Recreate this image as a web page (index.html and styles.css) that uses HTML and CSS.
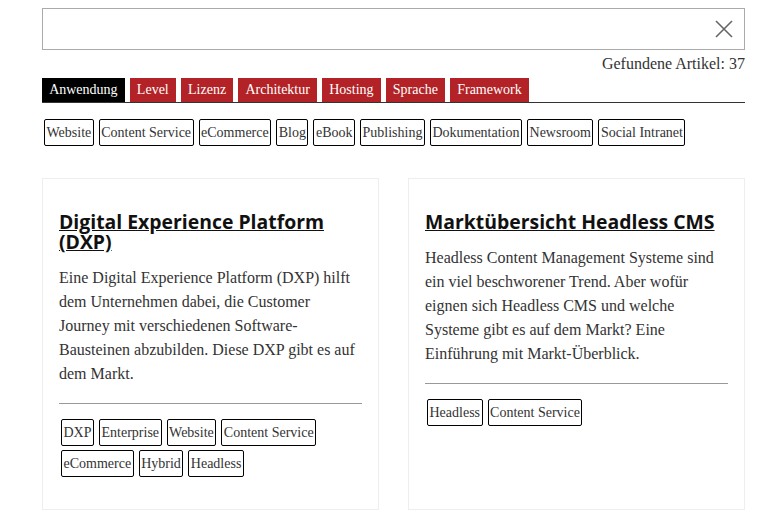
FILE: index.html
```html
<!DOCTYPE html>
<html lang="de">
<head>
<meta charset="utf-8">
<title>Artikel</title>
<link rel="stylesheet" href="styles.css">
</head>
<body>
<div class="page">
  <div class="search">
    <input class="search-input" type="text" aria-label="Suche">
    <button class="clear" aria-label="Leeren">
      <svg width="18" height="18" viewBox="0 0 18 18"><path d="M1 1L17 17M17 1L1 17" stroke="#666" stroke-width="1.6" fill="none"/></svg>
    </button>
  </div>
  <div class="count">Gefundene Artikel: 37</div>
  <nav class="tabs">
    <span class="tab active">Anwendung</span>
    <span class="tab">Level</span>
    <span class="tab">Lizenz</span>
    <span class="tab">Architektur</span>
    <span class="tab">Hosting</span>
    <span class="tab">Sprache</span>
    <span class="tab">Framework</span>
  </nav>
  <div class="tags filter">
    <span class="tag">Website</span>
    <span class="tag">Content Service</span>
    <span class="tag">eCommerce</span>
    <span class="tag">Blog</span>
    <span class="tag">eBook</span>
    <span class="tag">Publishing</span>
    <span class="tag">Dokumentation</span>
    <span class="tag">Newsroom</span>
    <span class="tag">Social Intranet</span>
  </div>
  <div class="cards">
    <article class="card">
      <h2 class="card-title"><a href="#">Digital Experience Platform (DXP)</a></h2>
      <p class="card-text">Eine Digital Experience Platform (DXP) hilft dem Unternehmen dabei, die Customer Journey mit verschiedenen Software-Bausteinen abzubilden. Diese DXP gibt es auf dem Markt.</p>
      <hr class="card-rule">
      <div class="tags">
        <span class="tag">DXP</span>
        <span class="tag">Enterprise</span>
        <span class="tag">Website</span>
        <span class="tag">Content Service</span>
        <span class="tag">eCommerce</span>
        <span class="tag">Hybrid</span>
        <span class="tag">Headless</span>
      </div>
    </article>
    <article class="card">
      <h2 class="card-title"><a href="#">Marktübersicht Headless CMS</a></h2>
      <p class="card-text">Headless Content Management Systeme sind ein viel beschworener Trend. Aber wofür eignen sich Headless CMS und welche Systeme gibt es auf dem Markt? Eine Einführung mit Markt-Überblick.</p>
      <hr class="card-rule">
      <div class="tags">
        <span class="tag">Headless</span>
        <span class="tag">Content Service</span>
      </div>
    </article>
  </div>
</div>
</body>
</html>
```

FILE: styles.css
```css
html, body {
  margin: 0;
  padding: 0;
  background: #fff;
}
body {
  font-family: "Liberation Serif", "Times New Roman", serif;
  color: #333;
}
.page {
  padding: 8px 24px 0 42px;
}
.search {
  display: flex;
  align-items: center;
  height: 42px;
  box-sizing: border-box;
  border: 1px solid #aaa;
}
.search-input {
  flex: 1;
  border: 0;
  outline: none;
  height: 100%;
  padding: 0 10px;
  font: inherit;
  background: transparent;
}
.clear {
  border: 0;
  background: none;
  padding: 0;
  margin-right: 11px;
  width: 18px;
  height: 18px;
  display: flex;
}
.count {
  text-align: right;
  font-size: 16px;
  line-height: 20px;
  padding: 4px 0 4px;
}
.tabs {
  display: flex;
  gap: 5px;
  border-bottom: 1px solid #333;
}
.tab {
  background: #b22226;
  color: #fff;
  font-size: 14px;
  line-height: 18px;
  padding: 3px 7.15px;
}
.tab.active {
  background: #000;
}
.tags {
  display: flex;
  flex-wrap: wrap;
  gap: 4px 5px;
  padding-left: 2px;
}
.filter {
  margin-top: 16px;
}
.tag {
  border: 1px solid #000;
  border-radius: 2px;
  font-size: 14px;
  line-height: 21px;
  padding: 2px 1.5px;
  color: #333;
}
.cards {
  display: grid;
  grid-template-columns: 1fr 1fr;
  gap: 29px;
  margin-top: 32px;
}
.card {
  border: 1px solid #eee;
  padding: 32px 16px 32px;
}
.card-title {
  margin: 0;
  font-family: "Open Sans", "Noto Sans", sans-serif;
  font-weight: 700;
  font-size: 19.4px;
  line-height: 20px;
  padding-top: 1px;
}
.card-title a {
  color: #111;
  text-decoration: underline;
}
.card-text {
  margin: 14px 0 0;
  font-size: 16px;
  line-height: 24px;
  color: #333;
}
.card-rule {
  border: 0;
  border-top: 1px solid #999;
  margin: 17px 0 15px;
}
```
